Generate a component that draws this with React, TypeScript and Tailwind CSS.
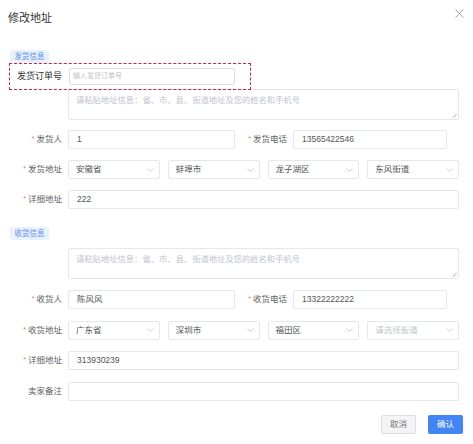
import React from 'react';

const font = "font-['Liberation_Sans','Noto_Sans_CJK_SC',sans-serif]";

function Chevron() {
  return (
    <svg width="7" height="4" viewBox="0 0 7 4" className="shrink-0">
      <path d="M0.5 0.5 L3.5 3.3 L6.5 0.5" fill="none" stroke="#c0c4cc" strokeWidth="0.8" />
    </svg>
  );
}

function Label({ text, required = true, w = 'w-[58px]' }: { text: string; required?: boolean; w?: string }) {
  return (
    <div className={`${w} shrink-0 flex justify-end items-center pr-[6px] text-[8.5px] text-[#606266]`}>
      {required && <span className="text-[#f56c6c] mr-[2px] text-[7px]">*</span>}
      {text}
    </div>
  );
}

function Input({ value, placeholder, w = 'flex-1' }: { value?: string; placeholder?: string; w?: string }) {
  return (
    <div className={`${w} h-[19px] border border-[#e4e7ed] rounded-[2px] bg-white flex items-center px-[8px] text-[8.5px]`}>
      {value ? <span className="text-[#555]">{value}</span> : <span className="text-[#c0c4cc]">{placeholder}</span>}
    </div>
  );
}

function Select({ value, placeholder }: { value?: string; placeholder?: string }) {
  return (
    <div className="h-[19px] border border-[#e4e7ed] rounded-[2px] bg-white flex items-center justify-between pl-[7px] pr-[5px] text-[8.5px]">
      {value ? <span className="text-[#555]">{value}</span> : <span className="text-[#c0c4cc]">{placeholder}</span>}
      <Chevron />
    </div>
  );
}

function Tag({ text }: { text: string }) {
  return (
    <div className="ml-[10px] w-[39px] h-[13px] rounded-[2px] bg-[#e9f1fd] text-[#5b8ff0] text-[7.5px] flex items-center justify-center">
      {text}
    </div>
  );
}

function PasteBox() {
  return (
    <div className="ml-[68px] w-[391px] h-[31px] border border-[#e4e7ed] rounded-[2px] bg-white relative px-[7px] pt-[4px] text-[8.3px] text-[#c0c4cc]">
      请粘贴地址信息：省、市、县、街道地址及您的姓名和手机号
      <svg width="5" height="5" viewBox="0 0 5 5" className="absolute right-[1px] bottom-[1px]">
        <path d="M4.5 0.5 L0.5 4.5 M4.5 2.5 L2.5 4.5" stroke="#999" strokeWidth="0.6" />
      </svg>
    </div>
  );
}

function PersonRow({ name, nameLabel, phone, phoneLabel }: { name: string; nameLabel: string; phone: string; phoneLabel: string }) {
  return (
    <div className="flex items-center pl-[10px]">
      <Label text={nameLabel} />
      <Input value={name} w="w-[167px]" />
      <Label text={phoneLabel} w="w-[58px]" />
      <Input value={phone} w="w-[154px]" />
    </div>
  );
}

function AddressRow({ label, items }: { label: string; items: { value?: string; placeholder?: string }[] }) {
  return (
    <div className="flex items-center pl-[10px]">
      <Label text={label} />
      <div className="w-[391px] grid grid-cols-4 gap-[8px]">
        {items.map((it, i) => (
          <Select key={i} value={it.value} placeholder={it.placeholder} />
        ))}
      </div>
    </div>
  );
}

function FieldRow({ label, value, required = true }: { label: string; value?: string; required?: boolean }) {
  return (
    <div className="flex items-center pl-[10px]">
      <Label text={label} required={required} />
      <Input value={value} w="w-[391px]" />
    </div>
  );
}

export default function App() {
  return (
    <div className={`w-[473px] h-[444px] bg-white overflow-hidden relative ${font}`}>
      <div className="pl-[8px] pt-[11px] text-[11px] leading-[14px] text-[#333]">修改地址</div>
      <button className="absolute right-[9px] top-[9px]">
        <svg width="9" height="9" viewBox="0 0 9 9">
          <path d="M0.5 0.5 L8.5 8.5 M8.5 0.5 L0.5 8.5" stroke="#909399" strokeWidth="0.8" />
        </svg>
      </button>

      <div className="mt-[25px]">
        <Tag text="发货信息" />
      </div>
      <div className="relative z-10 ml-[9px] w-[242px] h-[27px] border border-dashed border-[#c8283a] flex items-center">
        <div className="w-[53px] pl-[7px] text-[9px] text-[#333]">发货订单号</div>
        <div className="ml-[6px] w-[166px] h-[17px] border border-[#dcdfe6] rounded-[2px] bg-white flex items-center px-[3px] text-[7px] text-[#c0c4cc]">
          输入发货订单号
        </div>
      </div>
      <div className="-mt-[1px]">
        <PasteBox />
      </div>

      <div className="mt-[10px] flex flex-col gap-[11px]">
        <PersonRow nameLabel="发货人" name="1" phoneLabel="发货电话" phone="13565422546" />
        <AddressRow
          label="发货地址"
          items={[{ value: '安徽省' }, { value: '蚌埠市' }, { value: '龙子湖区' }, { value: '东风街道' }]}
        />
        <FieldRow label="详细地址" value="222" />
      </div>

      <div className="mt-[18px]">
        <Tag text="收货信息" />
      </div>
      <div className="mt-[8px]">
        <PasteBox />
      </div>

      <div className="mt-[11px] flex flex-col gap-[11.5px]">
        <PersonRow nameLabel="收货人" name="陈风风" phoneLabel="收货电话" phone="13322222222" />
        <AddressRow
          label="收货地址"
          items={[{ value: '广东省' }, { value: '深圳市' }, { value: '福田区' }, { placeholder: '请选择街道' }]}
        />
        <FieldRow label="详细地址" value="313930239" />
        <FieldRow label="卖家备注" required={false} />
      </div>

      <div className="mt-[14px] flex justify-end gap-[12px] pr-[10px]">
        <button className="w-[35px] h-[19px] rounded-[2px] border border-[#dcdfe6] bg-[#f4f4f5] text-[8.5px] text-[#777]">取消</button>
        <button className="w-[35px] h-[19px] rounded-[2px] bg-[#4285f4] text-[8.5px] text-white">确认</button>
      </div>
    </div>
  );
}
